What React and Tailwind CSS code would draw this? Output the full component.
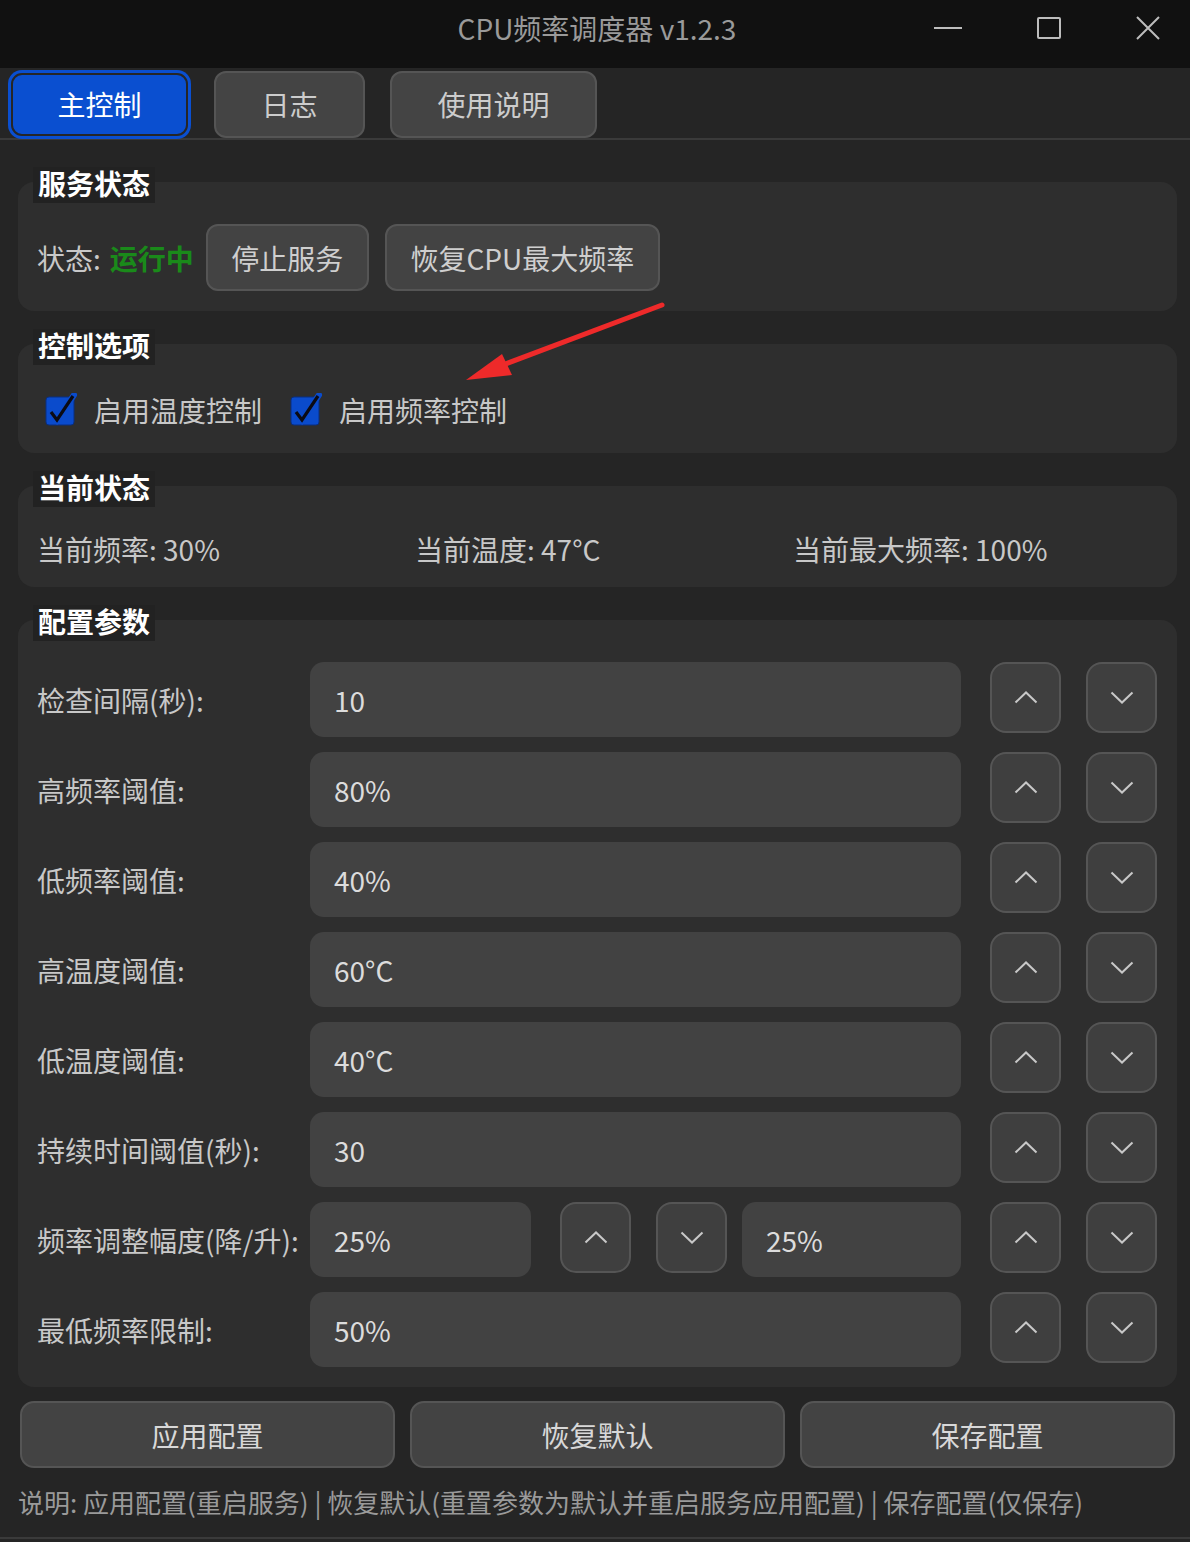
import React from 'react';

const ROWS = [
  { label: "检查间隔(秒):", value: "10" },
  { label: "高频率阈值:", value: "80%" },
  { label: "低频率阈值:", value: "40%" },
  { label: "高温度阈值:", value: "60°C" },
  { label: "低温度阈值:", value: "40°C" },
  { label: "持续时间阈值(秒):", value: "30" },
  { label: "频率调整幅度(降/升):", split: ["25%", "25%"] },
  { label: "最低频率限制:", value: "50%" },
];

const Chevron = ({ up }) => (
  <svg width="24" height="13" viewBox="0 0 24 13" fill="none">
    <polyline
      points={up ? "1.5,11.5 12,1.5 22.5,11.5" : "1.5,1.5 12,11.5 22.5,1.5"}
      stroke="#c8c8c8"
      strokeWidth="2"
    />
  </svg>
);

const SpinButton = ({ up }) => (
  <button className="w-[71px] h-[71px] shrink-0 rounded-[16px] border-2 border-[#555555] bg-[#3f3f3f] flex items-center justify-center">
    <Chevron up={up} />
  </button>
);

const Field = ({ value, className = "" }) => (
  <div className={"h-[75px] rounded-[14px] bg-[#424242] pl-[24px] flex items-center text-[28px] text-[#dcdcdc] " + className}>
    {value}
  </div>
);

const CheckBox = () => (
  <svg width="34" height="34" viewBox="0 0 34 34">
    <rect x="1" y="4" width="28" height="28" rx="3" fill="#0a4bcc" stroke="#092e80" strokeWidth="1" />
    <polyline points="6,19 12,27 29,2" fill="none" stroke="#0a4bcc" strokeWidth="6" strokeLinecap="round" />
    <polyline points="6,19 12,27 28,3" fill="none" stroke="#0b0b14" strokeWidth="3.2" />
  </svg>
);

const Group = ({ title, children, className = "" }) => (
  <section className="mt-[18px] first:mt-0">
    <div className="flex">
      <span className="relative z-10 ml-[15px] h-[36px] px-[5px] bg-[#222222] text-[28px] leading-[32px] font-bold text-white">
        {title}
      </span>
    </div>
    <div className={"-mt-[21px] rounded-[16px] bg-[#2e2e2e] pl-[19px] pr-[20px] pt-[42px] " + className}>
      {children}
    </div>
  </section>
);

const GrayButton = ({ children, className = "" }) => (
  <button className={"h-[67px] rounded-[12px] border-2 border-[#555555] bg-[#434343] text-[28px] text-[#cfcfcf] " + className}>
    {children}
  </button>
);

const App = () => {
  return (
    <div className="relative w-[1190px] h-[1542px] overflow-hidden bg-[#252525] font-['Noto_Sans_CJK_SC','Noto_Sans',sans-serif]">
      {/* title bar */}
      <div className="h-[68px] pb-[12px] bg-[#111111] grid grid-cols-[1fr_auto_1fr] items-center">
        <div />
        <div className="text-[28px] text-[#9a9a9a] pl-[4px]">CPU频率调度器 v1.2.3</div>
        <div className="flex items-center justify-end pr-[30px] gap-[75px] text-[#bdbdbd]">
          <svg width="28" height="4" viewBox="0 0 28 4"><rect x="0" y="1" width="28" height="2" fill="#bdbdbd" /></svg>
          <svg width="24" height="22" viewBox="0 0 24 22"><rect x="1" y="1" width="22" height="20" rx="1" fill="none" stroke="#bdbdbd" strokeWidth="2" /></svg>
          <svg width="24" height="24" viewBox="0 0 24 24"><path d="M1 1 L23 23 M23 1 L1 23" stroke="#bdbdbd" strokeWidth="2" /></svg>
        </div>
      </div>

      {/* tabs */}
      <div className="h-[72px] pt-[2px] border-b-2 border-[#3a3a3a] flex items-center pl-[11px]">
        <button className="w-[177px] h-[63px] rounded-[11px] bg-[#0a4fd0] border-2 border-[#262626] ring-[3px] ring-[#0a4fd0] text-[28px] text-white">
          主控制
        </button>
        <button className="ml-[26px] w-[151px] h-[67px] rounded-[12px] bg-[#444444] border-2 border-[#555555] text-[28px] text-[#cccccc]">
          日志
        </button>
        <button className="ml-[25px] w-[207px] h-[67px] rounded-[12px] bg-[#444444] border-2 border-[#555555] text-[28px] text-[#cccccc]">
          使用说明
        </button>
      </div>

      <main className="pl-[18px] pr-[13px] pt-[27px]">
        <Group title="服务状态" className="pb-[20px]">
          <div className="flex items-center h-[67px]">
            <span className="text-[28px] text-[#c8c8c8]">状态:</span>
            <span className="ml-[9px] text-[28px] font-bold text-[#1a8a1a]">运行中</span>
            <GrayButton className="ml-[12px] w-[163px]">停止服务</GrayButton>
            <GrayButton className="ml-[16px] w-[275px]">恢复CPU最大频率</GrayButton>
          </div>
        </Group>

        <Group title="控制选项" className="pb-[19px]">
          <div className="flex items-center h-[48px]">
            <div className="ml-[8px] flex items-center">
              <CheckBox />
              <span className="ml-[15px] text-[28px] text-[#c8c8c8]">启用温度控制</span>
            </div>
            <div className="ml-[28px] flex items-center">
              <CheckBox />
              <span className="ml-[15px] text-[28px] text-[#c8c8c8]">启用频率控制</span>
            </div>
          </div>
        </Group>

        <Group title="当前状态" className="pb-[17px]">
          <div className="grid grid-cols-[378px_378px_1fr] items-center h-[42px] text-[28px] text-[#c8c8c8]">
            <span>当前频率: 30%</span>
            <span>当前温度: 47°C</span>
            <span>当前最大频率: 100%</span>
          </div>
        </Group>

        <Group title="配置参数" className="pb-[20px]">
          <div className="flex flex-col gap-[15px]">
            {ROWS.map((row) => (
              <div key={row.label} className="flex items-start h-[75px]">
                <div className="w-[273px] shrink-0 h-[75px] flex items-center text-[28px] text-[#c8c8c8] whitespace-nowrap">
                  {row.label}
                </div>
                {row.split ? (
                  <>
                    <Field value={row.split[0]} className="w-[221px] shrink-0" />
                    <div className="ml-[29px]"><SpinButton up /></div>
                    <div className="ml-[25px]"><SpinButton /></div>
                    <Field value={row.split[1]} className="ml-[15px] flex-1" />
                  </>
                ) : (
                  <Field value={row.value} className="flex-1" />
                )}
                <div className="ml-[29px]"><SpinButton up /></div>
                <div className="ml-[25px]"><SpinButton /></div>
              </div>
            ))}
          </div>
        </Group>

        <div className="mt-[14px] px-[2px] grid grid-cols-3 gap-[15px]">
          <GrayButton className="h-[66px] rounded-[14px] bg-[#414141] text-[#d8d8d8]">应用配置</GrayButton>
          <GrayButton className="h-[66px] rounded-[14px] bg-[#414141] text-[#d8d8d8]">恢复默认</GrayButton>
          <GrayButton className="h-[66px] rounded-[14px] bg-[#414141] text-[#d8d8d8]">保存配置</GrayButton>
        </div>
      </main>

      <p className="mt-[17px] pl-[18px] h-[34px] leading-[34px] text-[26px] text-[#9a9a9a] whitespace-nowrap">
        说明: 应用配置(重启服务) | 恢复默认(重置参数为默认并重启服务应用配置) | 保存配置(仅保存)
      </p>
      <div className="mt-[18px] border-t-2 border-[#3a3a3a]" />

      {/* annotation arrow */}
      <svg className="absolute left-[460px] top-[298px]" width="212" height="90" viewBox="460 298 212 90">
        <line x1="662" y1="305" x2="500" y2="366" stroke="#ee2a2a" strokeWidth="5" strokeLinecap="round" />
        <polygon points="466,380 502,354 512,375" fill="#ee2a2a" />
      </svg>
    </div>
  );
};

export default App;
